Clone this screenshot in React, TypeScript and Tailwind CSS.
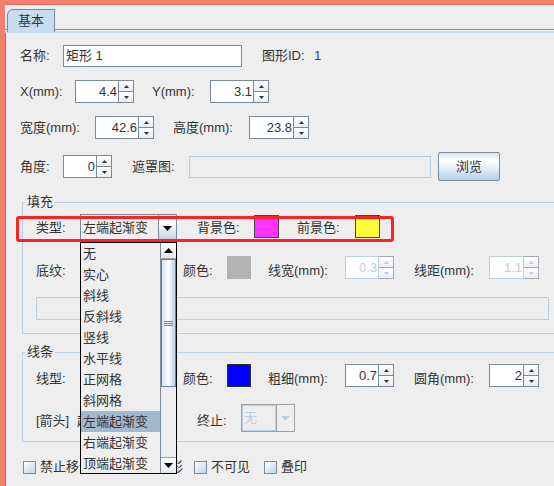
import React from "react";

const T = "text-[13px] leading-4 text-[#333333] whitespace-nowrap";

function Tri({ down = false, color = "#333333" }: { down?: boolean; color?: string }) {
  return (
    <svg width="5" height="3" viewBox="0 0 5 3">
      <polygon points={down ? "0,0 5,0 2.5,3" : "0,3 2.5,0 5,3"} fill={color} />
    </svg>
  );
}

function BigTri({ down = false, color = "#000000" }: { down?: boolean; color?: string }) {
  return (
    <svg width="9" height="5" viewBox="0 0 9 5">
      <polygon points={down ? "0,0 9,0 4.5,5" : "0,5 4.5,0 9,5"} fill={color} />
    </svg>
  );
}

function Spinner({ value, fw, disabled = false }: { value: string; fw: string; disabled?: boolean }) {
  const fb = disabled ? "border-[#b8cfe5] text-[#b8cfe5]" : "border-[#7a8a99] text-[#333333]";
  const bb = disabled ? "border-[#a8a8a8]" : "border-[#7a8a99]";
  const ac = disabled ? "#b8cfe5" : "#333333";
  return (
    <div className="flex h-[23px] shrink-0">
      <div className={`${fw} h-full border bg-white ${fb} flex items-center justify-end pr-[1px] text-[13px] leading-4`}>
        {value}
      </div>
      <div className="w-[15px] h-full flex flex-col">
        <div className={`h-[12px] border border-l-0 ${bb} flex items-center justify-center bg-linear-to-b from-white to-[#e9edf2]`}>
          <Tri color={ac} />
        </div>
        <div className={`h-[11px] border border-l-0 border-t-0 ${bb} flex items-center justify-center bg-linear-to-b from-white to-[#e9edf2]`}>
          <Tri down color={ac} />
        </div>
      </div>
    </div>
  );
}

function Swatch({ color, border }: { color: string; border: string }) {
  return <div className={`self-start w-[24px] h-[23px] shrink-0 border ${border} ${color}`} />;
}

function Check({ label, w }: { label: string; w: string }) {
  return (
    <div className={`flex items-center gap-[4px] ${w} shrink-0`}>
      <div className="w-[13px] h-[13px] border border-[#7a8a99] bg-linear-to-br from-white to-[#c0d3e8] shrink-0" />
      <span className={T}>{label}</span>
    </div>
  );
}

const ITEMS = ["无", "实心", "斜线", "反斜线", "竖线", "水平线", "正网格", "斜网格", "左端起渐变", "右端起渐变", "顶端起渐变"];

export default function App() {
  return (
    <div className="w-[554px] h-[486px] overflow-hidden bg-[#f3806f] pt-[4px] pl-[5px] font-['Liberation_Sans','Noto_Sans_CJK_SC',sans-serif]">
      <div className="w-[560px] h-[482px] bg-[#eeeeee] border-t border-[#e0695a] flex flex-col">
        {/* tab strip */}
        <div className="h-[25px] border-b border-[#7a8a99] flex items-end pl-[2px] shrink-0">
          <div className="relative z-10 w-[48px] h-[23px] -mb-[3px] border border-b-0 border-[#7a8a99] rounded-tl-[6px] bg-[#c8ddf2] flex items-start justify-center pt-[3px]">
            <span className={T}>基本</span>
          </div>
        </div>
        <div className="h-[1px] bg-[#f4f7fb] shrink-0" />
        <div className="h-[2px] bg-[#c8ddf2] shrink-0" />

        {/* content */}
        <div className="relative flex-1 border-l border-[#7a8a99] pl-[14px] flex flex-col">
          {/* row 1 */}
          <div className="mt-[12px] h-[22px] flex items-center">
            <span className={`${T} w-[43px]`}>名称:</span>
            <div className="w-[179px] h-[22px] border border-[#7a8a99] bg-white flex items-center pl-[2px]">
              <span className={T}>矩形 1</span>
            </div>
            <span className={`${T} ml-[20px] w-[52px]`}>图形ID:</span>
            <span className="text-[13px] leading-4 text-[#2a2aff]">1</span>
          </div>

          {/* row 2 */}
          <div className="mt-[13px] h-[23px] flex items-center">
            <span className={`${T} w-[55px]`}>X(mm):</span>
            <Spinner value="4.4" fw="w-[44px]" />
            <span className={`${T} ml-[18px] w-[58px]`}>Y(mm):</span>
            <Spinner value="3.1" fw="w-[44px]" />
          </div>

          {/* row 3 */}
          <div className="mt-[13px] h-[23px] flex items-center">
            <span className={`${T} w-[75px]`}>宽度(mm):</span>
            <Spinner value="42.6" fw="w-[44px]" />
            <span className={`${T} ml-[19px] w-[76px]`}>高度(mm):</span>
            <Spinner value="23.8" fw="w-[45px]" />
          </div>

          {/* row 4 */}
          <div className="mt-[13px] h-[29px] flex items-center">
            <span className={`${T} w-[43px]`}>角度:</span>
            <Spinner value="0" fw="w-[34px]" />
            <span className={`${T} ml-[20px] w-[57px]`}>遮罩图:</span>
            <div className="w-[242px] h-[22px] border border-[#b8cfe5] bg-[#eeeeee]" />
            <div className="ml-[7px] w-[62px] h-[29px] border border-[#7a8a99] rounded-[2px] bg-linear-to-b from-[#dde8f3] via-white via-30% to-[#b8cfe5] flex items-center justify-center">
              <span className={T}>浏览</span>
            </div>
          </div>

          {/* fill group */}
          <fieldset className="mt-[13px] ml-[2px] w-[545px] border border-[#b8cfe5] p-0 shrink-0">
            <legend className={`${T} ml-[2px] px-[2px]`}>填充</legend>
            <div className="pl-[13px] pt-[4px] pb-[13px] flex flex-col">
              <div className="h-[28px] flex items-center">
                <span className={`${T} w-[44px]`}>类型:</span>
                <div className="w-[97px] h-[28px] flex border border-[#7a8a99]">
                  <div className="flex-1 bg-[#eeeeee] flex items-center pl-[2px]">
                    <span className={T}>左端起渐变</span>
                  </div>
                  <div className="w-[18px] h-full border-l border-[#7a8a99] bg-linear-to-b from-[#dde8f3] via-white via-30% to-[#b8cfe5] flex items-center justify-center">
                    <BigTri down />
                  </div>
                </div>
                <span className={`${T} ml-[20px] w-[57px]`}>背景色:</span>
                <div className="self-start mt-[1px] w-[25px] h-[23px] border border-[#444444] bg-[#ff33ff]" />
                <span className={`${T} ml-[18px] w-[58px]`}>前景色:</span>
                <div className="self-start mt-[1px] w-[25px] h-[23px] border border-[#444444] bg-[#ffff33]" />
              </div>

              <div className="mt-[14px] h-[30px] flex items-center">
                <span className={`${T} w-[44px]`}>底纹:</span>
                <div className="w-[103px] shrink-0" />
                <span className={`${T} w-[44px]`}>颜色:</span>
                <Swatch color="bg-[#b3b3b3]" border="border-[#b3b3b3]" />
                <span className={`${T} ml-[17px] w-[77px]`}>线宽(mm):</span>
                <div className="self-start">
                  <Spinner value="0.3" fw="w-[34px]" disabled />
                </div>
                <span className={`${T} ml-[20px] w-[75px]`}>线距(mm):</span>
                <div className="self-start">
                  <Spinner value="1.1" fw="w-[35px]" disabled />
                </div>
              </div>

              <div className="mt-[11px] w-[513px] h-[23px] border border-[#b8cfe5]" />
            </div>
          </fieldset>

          {/* line group */}
          <fieldset className="mt-[10px] ml-[2px] w-[545px] border border-[#b8cfe5] p-0 shrink-0">
            <legend className={`${T} ml-[2px] px-[2px]`}>线条</legend>
            <div className="pl-[13px] pt-[4px] pb-[3px] flex flex-col">
              <div className="h-[30px] flex items-center">
                <span className={`${T} w-[44px]`}>线型:</span>
                <div className="w-[103px] shrink-0" />
                <span className={`${T} w-[44px]`}>颜色:</span>
                <Swatch color="bg-[#0000ff]" border="border-[#333333]" />
                <span className={`${T} ml-[17px] w-[77px]`}>粗细(mm):</span>
                <div className="self-start">
                  <Spinner value="0.7" fw="w-[34px]" />
                </div>
                <span className={`${T} ml-[20px] w-[75px]`}>圆角(mm):</span>
                <div className="self-start">
                  <Spinner value="2" fw="w-[35px]" />
                </div>
              </div>
              <div className="mt-[10px] h-[34px] flex items-center">
                <span className={`${T} w-[41px]`}>[箭头]</span>
                <span className={`${T} w-[120px]`}>起始:</span>
                <span className={`${T} w-[44px]`}>终止:</span>
                <div className="self-start w-[54px] h-[28px] flex border border-[#a0a0a0]">
                  <div className="flex-1 border border-[#b8cfe5] bg-[#eeeeee] flex items-center pl-[1px]">
                    <span className="text-[13px] leading-4 text-[#b8cfe5]">无</span>
                  </div>
                  <div className="w-[18px] h-full bg-[#eeeeee] border-l border-[#a0a0a0] flex items-center justify-center">
                    <BigTri down color="#b8cfe5" />
                  </div>
                </div>
              </div>
            </div>
          </fieldset>

          {/* checkboxes */}
          <div className="mt-[17px] ml-[3px] h-[16px] flex items-center">
            <Check label="禁止移动旋转和缩放变形" w="w-[171px]" />
            <Check label="不可见" w="w-[70px]" />
            <Check label="叠印" w="w-[60px]" />
          </div>

          {/* popup list overlay */}
          <div className="absolute left-[74px] top-[209px] w-[97px] h-[232px] border border-black bg-[#eeeeee] flex overflow-hidden z-20">
            <div className="w-[79px] flex flex-col">
              {ITEMS.map((it, i) => (
                <div
                  key={it}
                  className={`h-[21px] shrink-0 flex items-center pl-[2px] ${i === 8 ? "bg-[#a3b8cc]" : ""}`}
                >
                  <span className={T}>{it}</span>
                </div>
              ))}
            </div>
            <div className="w-[16px] flex flex-col border-l border-[#7a8a99]">
              <div className="h-[16px] shrink-0 border-b border-[#a0a0a0] bg-linear-to-b from-white to-[#e4e8ee] flex items-center justify-center">
                <BigTri />
              </div>
              <div className="h-[128px] shrink-0 border border-[#6382bf] bg-linear-to-r from-[#d2e1f1] via-white to-[#b8cfe5] flex flex-col items-center justify-center gap-[1px]">
                <div className="w-[9px] h-[1px] bg-[#6382bf]" />
                <div className="w-[9px] h-[1px] bg-[#6382bf]" />
                <div className="w-[9px] h-[1px] bg-[#6382bf]" />
              </div>
              <div className="flex-1 bg-[#eeeeee]" />
              <div className="h-[16px] shrink-0 border-t border-[#a0a0a0] bg-linear-to-b from-white to-[#e4e8ee] flex items-center justify-center">
                <BigTri down />
              </div>
            </div>
          </div>

          {/* red highlight annotation */}
          <div className="absolute left-[10px] top-[183px] w-[378px] h-[26px] border-[3px] border-[#ff2222] rounded-[3px] z-30 pointer-events-none" />
        </div>
      </div>
    </div>
  );
}
